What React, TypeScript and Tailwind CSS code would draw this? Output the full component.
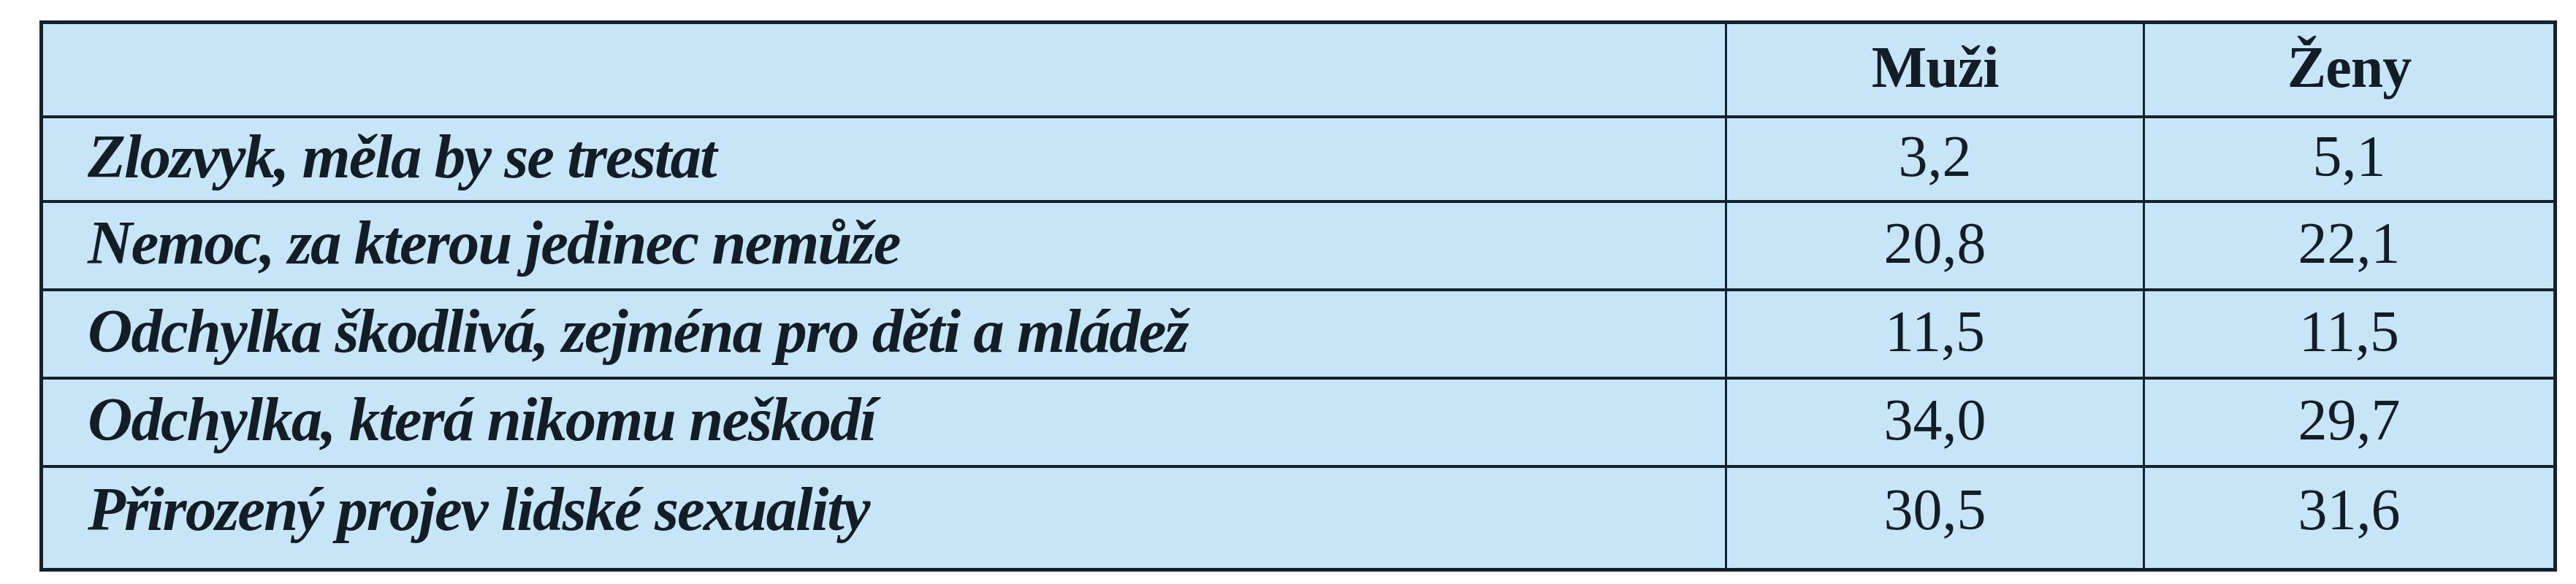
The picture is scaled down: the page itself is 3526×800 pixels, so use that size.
const rows = [
  { label: 'Zlozvyk, měla by se trestat', men: '3,2', women: '5,1', h: 'h-[116px]' },
  { label: 'Nemoc, za kterou jedinec nemůže', men: '20,8', women: '22,1', h: 'h-[121px]' },
  { label: 'Odchylka škodlivá, zejména pro děti a mládež', men: '11,5', women: '11,5', h: 'h-[121px]' },
  { label: 'Odchylka, která nikomu neškodí', men: '34,0', women: '29,7', h: 'h-[121px]' },
  { label: 'Přirozený projev lidské sexuality', men: '30,5', women: '31,6', h: 'h-[141px]' },
];

export default function App() {
  return (
    <div className="h-[800px] w-full bg-white pt-[28px] pl-[54px] [font-family:'Liberation_Serif','Times_New_Roman',serif] text-[#121d26]">
      <div className="w-[3446px] border-[5px] border-[#13222d] bg-[#c6e6f7]">
        {/* header */}
        <div className="flex h-[125px]">
          <div className="w-[2302px]" />
          <div className="flex w-[572px] items-center justify-center border-l-[3px] border-[#13222d] pb-[8px] text-[80px] leading-none font-bold tracking-[-1px]">
            Muži
          </div>
          <div className="flex w-[562px] items-center justify-center border-l-[3px] border-[#13222d] pb-[8px] text-[80px] leading-none font-bold tracking-[-1px]">
            Ženy
          </div>
        </div>

        {rows.map((r, i) => {
          const last = i === rows.length - 1;
          return (
            <div key={r.label} className={`flex border-t-[4px] border-[#13222d] ${r.h}`}>
              <div
                className={`flex w-[2302px] items-center pl-[61px] text-[85px] leading-none font-bold italic tracking-[-2px] ${
                  last ? 'pb-[24px]' : 'pb-[8px]'
                }`}
              >
                {r.label}
              </div>
              <div
                className={`flex w-[572px] items-center justify-center border-l-[3px] border-[#13222d] text-[80px] leading-none ${
                  last ? 'pb-[24px]' : 'pb-[8px]'
                }`}
              >
                {r.men}
              </div>
              <div
                className={`flex w-[562px] items-center justify-center border-l-[3px] border-[#13222d] text-[80px] leading-none ${
                  last ? 'pb-[24px]' : 'pb-[8px]'
                }`}
              >
                {r.women}
              </div>
            </div>
          );
        })}
      </div>
    </div>
  );
}
